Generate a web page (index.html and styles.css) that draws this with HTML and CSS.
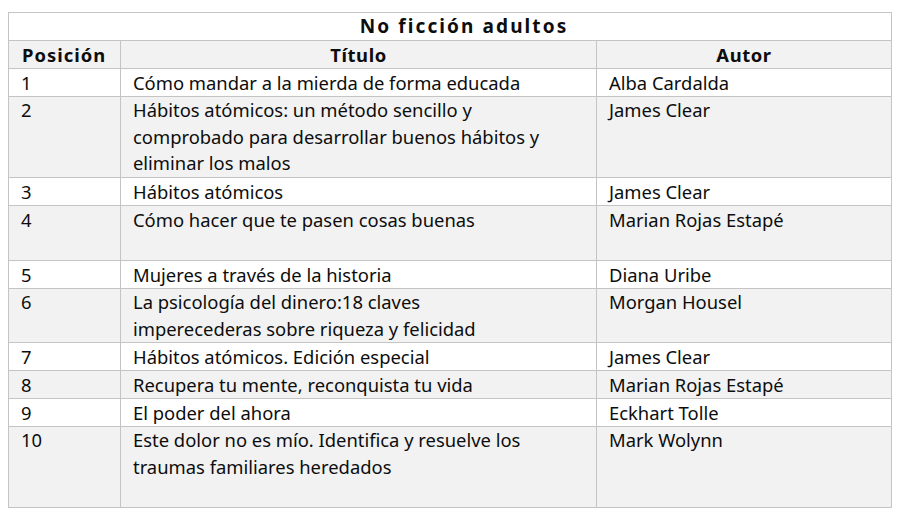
FILE: index.html
```html
<!DOCTYPE html>
<html lang="es">
<head>
<meta charset="utf-8">
<title>No ficción adultos</title>
<link rel="stylesheet" href="styles.css">
</head>
<body>
<table class="tbl">
  <colgroup>
    <col class="c-pos">
    <col class="c-tit">
    <col class="c-aut">
  </colgroup>
  <thead>
    <tr class="r-title"><th colspan="3">No ficción adultos</th></tr>
    <tr class="r-head"><th>Posición</th><th>Título</th><th>Autor</th></tr>
  </thead>
  <tbody>
    <tr class="odd"><td>1</td><td>Cómo mandar a la mierda de forma educada</td><td>Alba Cardalda</td></tr>
    <tr class="even h3"><td>2</td><td>Hábitos atómicos: un método sencillo y<br>comprobado para desarrollar buenos hábitos y<br>eliminar los malos</td><td>James Clear</td></tr>
    <tr class="odd"><td>3</td><td>Hábitos atómicos</td><td>James Clear</td></tr>
    <tr class="even h2a"><td>4</td><td>Cómo hacer que te pasen cosas buenas</td><td>Marian Rojas Estapé</td></tr>
    <tr class="odd"><td>5</td><td>Mujeres a través de la historia</td><td>Diana Uribe</td></tr>
    <tr class="even h2"><td>6</td><td>La psicología del dinero:18 claves<br>imperecederas sobre riqueza y felicidad</td><td>Morgan Housel</td></tr>
    <tr class="odd"><td>7</td><td>Hábitos atómicos. Edición especial</td><td>James Clear</td></tr>
    <tr class="even"><td>8</td><td>Recupera tu mente, reconquista tu vida</td><td>Marian Rojas Estapé</td></tr>
    <tr class="odd"><td>9</td><td>El poder del ahora</td><td>Eckhart Tolle</td></tr>
    <tr class="even h3"><td>10</td><td>Este dolor no es mío. Identifica y resuelve los<br>traumas familiares heredados</td><td>Mark Wolynn</td></tr>
  </tbody>
</table>
</body>
</html>
```
FILE: styles.css
```css
html, body {
  margin: 0;
  padding: 0;
  background: #ffffff;
}
body {
  padding: 12px 0 0 8px;
  font-family: "Noto Sans", "Open Sans", sans-serif;
  font-size: 18.4px;
  color: #0d0d0d;
}
.tbl {
  border-collapse: collapse;
  table-layout: fixed;
  width: 883px;
}
.c-pos { width: 112px; }
.c-tit { width: 476px; }
.c-aut { width: 295px; }
.tbl th,
.tbl td {
  border: 1px solid #c4c4c4;
  padding: 0 12px;
  line-height: 27px;
  height: 27px;
  vertical-align: top;
  text-align: left;
  font-weight: 400;
  white-space: nowrap;
}
.tbl th {
  font-weight: 700;
  text-align: center;
  letter-spacing: 0.6px;
}
.r-head th:first-child { text-align: left; padding-left: 13px; letter-spacing: 1px; }
.r-title th {
  background: #ffffff;
  font-size: 19px;
  letter-spacing: 2.1px;
  padding-left: 40px;
}
.r-head th { background: #f2f2f2; }
.odd td { background: #ffffff; }
.even td { background: #f2f2f2; }
.h2a td { height: 54px; }
.h2 td { height: 53px; line-height: 26.5px; }
.h3 td { height: 80px; line-height: 26.6px; }
```
